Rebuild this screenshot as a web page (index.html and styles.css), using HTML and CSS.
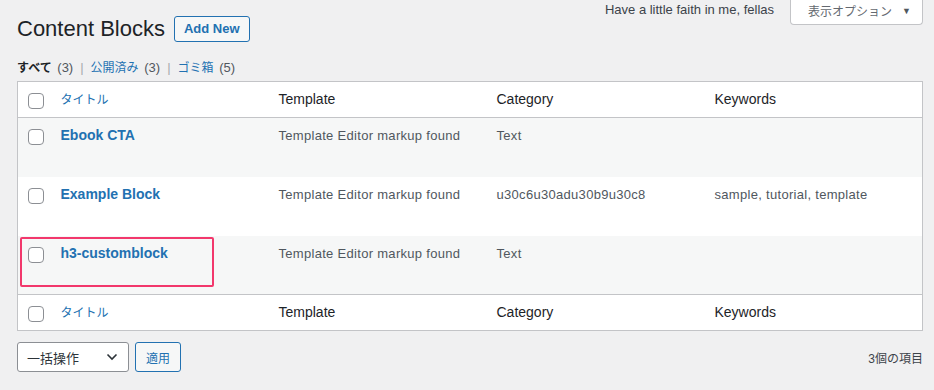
FILE: index.html
```html
<!DOCTYPE html>
<html lang="ja">
<head>
  <meta charset="UTF-8">
  <title>Content Blocks</title>
  <link rel="stylesheet" href="styles.css">
</head>
<body>

<div class="wrap">
  <div class="top">
    <div class="heading">
      <h1>Content Blocks</h1>
      <a class="add-new" href="#">Add New</a>
    </div>
    <div class="meta">
      <p class="dolly">Have a little faith in me, fellas</p>
      <button class="screen-options">表示オプション <span class="arrow">▼</span></button>
    </div>
  </div>

  <ul class="subsubsub">
    <li class="current"><span class="ja">すべて</span> <span class="count">(3)</span></li>
    <li class="sep">|</li>
    <li><a href="#" class="ja">公開済み</a> <span class="count">(3)</span></li>
    <li class="sep">|</li>
    <li><a href="#" class="ja">ゴミ箱</a> <span class="count">(5)</span></li>
  </ul>

  <div class="table-wrap">
    <table class="list">
      <colgroup>
        <col class="col-check">
        <col><col><col><col>
      </colgroup>
      <thead>
        <tr>
          <td class="check"><span class="box"></span></td>
          <th><a href="#" class="sort">タイトル</a></th>
          <th>Template</th>
          <th>Category</th>
          <th>Keywords</th>
        </tr>
      </thead>
      <tbody>
        <tr class="alt">
          <td class="check"><span class="box"></span></td>
          <td><a href="#" class="row-title">Ebook CTA</a></td>
          <td>Template Editor markup found</td>
          <td>Text</td>
          <td></td>
        </tr>
        <tr>
          <td class="check"><span class="box"></span></td>
          <td><a href="#" class="row-title">Example Block</a></td>
          <td>Template Editor markup found</td>
          <td>u30c6u30adu30b9u30c8</td>
          <td>sample, tutorial, template</td>
        </tr>
        <tr class="alt">
          <td class="check"><span class="box"></span></td>
          <td><a href="#" class="row-title">h3-customblock</a></td>
          <td>Template Editor markup found</td>
          <td>Text</td>
          <td></td>
        </tr>
      </tbody>
      <tfoot>
        <tr>
          <td class="check"><span class="box"></span></td>
          <th><a href="#" class="sort">タイトル</a></th>
          <th>Template</th>
          <th>Category</th>
          <th>Keywords</th>
        </tr>
      </tfoot>
    </table>
    <div class="highlight"></div>
  </div>

  <div class="tablenav">
    <div class="actions">
      <div class="select">
        一括操作
        <svg width="12" height="8" viewBox="0 0 12 8"><path d="M1.5 1.5l4.5 4.5 4.5-4.5" fill="none" stroke="#2c3338" stroke-width="1.6"/></svg>
      </div>
      <button class="apply">適用</button>
    </div>
    <span class="num">3個の項目</span>
  </div>
</div>

</body>
</html>
```

FILE: styles.css
```css
* {
  margin: 0; padding: 0; box-sizing: border-box;
}
body {
  background: #f0f0f1;
  color: #3c434a;
  font-family: 'Liberation Sans', 'Noto Sans CJK JP', sans-serif;
  font-size: 13px;
}
a {
  color: #2271b1;
  text-decoration: none;
}

.wrap {
  padding: 0 11px 0 17px;
}

.top {
  display: flex;
  justify-content: space-between;
  align-items: flex-start;
}

.heading {
  display: flex;
  align-items: center;
  padding-top: 16px;
}

.heading h1 {
  font-size: 22px;
  font-weight: 400;
  color: #1d2327;
  line-height: 26px;
}

.add-new {
  margin-left: 9px;
  height: 26px;
  line-height: 24px;
  padding: 0 9px;
  border: 1px solid #2271b1;
  border-radius: 3px;
  background: #f6f7f7;
  font-weight: 600;
  font-size: 13px;
}

.meta {
  display: flex;
  align-items: flex-start;
}

.dolly {
  font-size: 13px;
  line-height: 20px;
  color: #3c434a;
  margin-right: 16px;
}

.screen-options {
  display: flex;
  align-items: center;
  white-space: nowrap;
  font-family: inherit;
  font-size: 12px;
  color: #646970;
  background: #fff;
  border: 1px solid #c3c4c7;
  border-top: none;
  border-radius: 0 0 4px 4px;
  height: 25px;
  width: 133px;
  padding: 0 0 3px 17px;
}
.screen-options .arrow {
  font-size: 9px;
  margin-left: 10px;
  color: #50575e;
}

/* status links */
.subsubsub {
  list-style: none;
  display: flex;
  gap: 7px;
  margin-top: 16px;
  line-height: 20px;
  height: 23px;
  color: #646970;
  font-size: 13px;
}
.subsubsub .ja {
  font-size: 12px;
}
.subsubsub .current {
  color: #1d2327;
  font-weight: 700;
}
.subsubsub .count {
  font-weight: 400;
  color: #50575e;
  margin-left: 2px;
}
.subsubsub .sep {
  color: #a7aaad;
}

/* table */
.table-wrap {
  position: relative;
}

.list {
  width: 100%;
  table-layout: fixed;
  border-collapse: collapse;
  border: 1px solid #c3c4c7;
  background: #fff;
}
.col-check {
  width: 33px;
}

.list th, .list td {
  text-align: left;
  vertical-align: top;
  padding: 8px 10px;
}

.list thead th, .list tfoot th {
  font-weight: 400;
  font-size: 14px;
  color: #1d2327;
  line-height: 18px;
}
.list thead tr {
  border-bottom: 1px solid #c3c4c7;
}
.list tfoot tr {
  border-top: 1px solid #c3c4c7;
}
.list .sort {
  font-size: 12px;
}

.list tbody td {
  height: 59px;
  color: #50575e;
  line-height: 19px;
  letter-spacing: 0.3px;
}
.list tbody tr.alt {
  background: #f6f7f7;
}

.list .row-title {
  font-size: 14px;
  font-weight: 700;
  letter-spacing: 0;
}

.list td.check {
  padding: 11px 0 0 10px;
}
.list thead td.check, .list tfoot td.check {
  padding-top: 11px;
}

.box {
  display: block;
  width: 16px;
  height: 16px;
  border: 1px solid #8c8f94;
  border-radius: 4px;
  background: #fff;
}

/* annotation box over the third row */
.highlight {
  position: absolute;
  left: 3px;
  top: 156px;
  width: 194px;
  height: 50px;
  border: 2px solid #f2386c;
  border-radius: 2px;
}

/* bottom nav */
.tablenav {
  display: flex;
  justify-content: space-between;
  align-items: center;
  margin-top: 11px;
}
.actions {
  display: flex;
  gap: 6px;
}
.select {
  width: 112px;
  height: 30px;
  background: #fff;
  border: 1px solid #8c8f94;
  border-radius: 3px;
  color: #2c3338;
  font-size: 13px;
  padding: 0 10px 0 9px;
  display: flex;
  align-items: center;
  justify-content: space-between;
}
.apply {
  height: 30px;
  padding: 0 10px;
  font-family: inherit;
  font-size: 12px;
  color: #2271b1;
  background: #f6f7f7;
  border: 1px solid #2271b1;
  border-radius: 3px;
}
.num {
  color: #3c434a;
  font-size: 12px;
}
```
